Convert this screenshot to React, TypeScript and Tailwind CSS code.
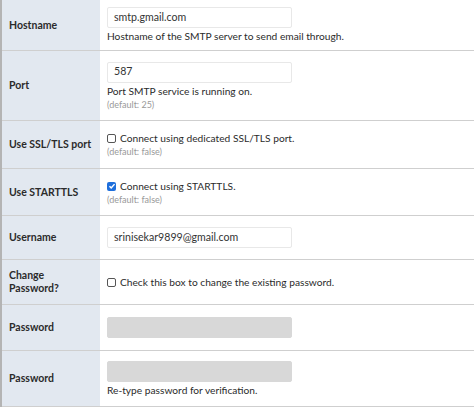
import React from "react";

type Row = {
  label: React.ReactNode;
  h: string;
  body: React.ReactNode;
};

const Input = ({ value, disabled }: { value?: string; disabled?: boolean }) => (
  <div
    className={
      "w-[185px] h-[21px] rounded-[2px] border px-[6px] flex items-center text-[10.6px] " +
      (disabled ? "bg-[#d8d8d8] border-[#d8d8d8]" : "bg-white border-[#e8e8e8] text-[#333]")
    }
  >
    {value}
  </div>
);

const Help = ({ children }: { children: React.ReactNode }) => (
  <div className="text-[10.2px] text-[#2b2b2b] leading-[13px] mt-[2px]">{children}</div>
);

const Def = ({ children }: { children: React.ReactNode }) => (
  <div className="text-[9px] text-[#999] leading-[11px] mt-[1px]">{children}</div>
);

const Check = ({ checked, label }: { checked?: boolean; label: string }) => (
  <div className="flex items-center gap-[4px] text-[10.2px] text-[#2b2b2b] leading-[13px]">
    {checked ? (
      <span className="w-[9px] h-[9px] rounded-[2px] bg-[#1f6fdc] flex items-center justify-center">
        <svg viewBox="0 0 12 12" className="w-[8px] h-[8px]">
          <path d="M2.2 6.3 L4.8 8.8 L9.8 3.2" fill="none" stroke="white" strokeWidth="2.2" />
        </svg>
      </span>
    ) : (
      <span className="w-[9px] h-[9px] rounded-[2px] border border-[#555] bg-white" />
    )}
    <span>{label}</span>
  </div>
);

const rows: Row[] = [
  {
    label: "Hostname",
    h: "h-[51px]",
    body: (
      <>
        <Input value="smtp.gmail.com" />
        <Help>Hostname of the SMTP server to send email through.</Help>
      </>
    ),
  },
  {
    label: "Port",
    h: "h-[70px]",
    body: (
      <>
        <Input value="587" />
        <Help>Port SMTP service is running on.</Help>
        <Def>(default: 25)</Def>
      </>
    ),
  },
  {
    label: "Use SSL/TLS port",
    h: "h-[48px]",
    body: (
      <>
        <Check label="Connect using dedicated SSL/TLS port." />
        <Def>(default: false)</Def>
      </>
    ),
  },
  {
    label: "Use STARTTLS",
    h: "h-[47px]",
    body: (
      <>
        <Check checked label="Connect using STARTTLS." />
        <Def>(default: false)</Def>
      </>
    ),
  },
  {
    label: "Username",
    h: "h-[44px]",
    body: <Input value="srinisekar9899@gmail.com" />,
  },
  {
    label: (
      <>
        Change
        <br />
        Password?
      </>
    ),
    h: "h-[45px]",
    body: <Check label="Check this box to change the existing password." />,
  },
  {
    label: "Password",
    h: "h-[46px]",
    body: <Input disabled />,
  },
  {
    label: "Password",
    h: "h-[56px]",
    body: (
      <>
        <Input disabled />
        <Help>Re-type password for verification.</Help>
      </>
    ),
  },
];

export default function App() {
  return (
    <div className="w-[474px] h-[411px] bg-white" style={{ fontFamily: "Lato, 'Noto Sans', sans-serif" }}>
      <div className="border-l-2 border-[#b4b4b4]">
        {rows.map((r, i) => (
          <div key={i} className={"flex border-b-[1.5px] border-[#cfcfcf] " + r.h}>
            <div className="w-[98px] shrink-0 bg-[#e2e8f0] flex items-center pl-[7px] text-[10.5px] font-bold text-[#2b2b2b] leading-[13px]">
              <div>{r.label}</div>
            </div>
            <div className="flex-1 flex flex-col justify-center pl-[7px]">{r.body}</div>
          </div>
        ))}
      </div>
    </div>
  );
}
